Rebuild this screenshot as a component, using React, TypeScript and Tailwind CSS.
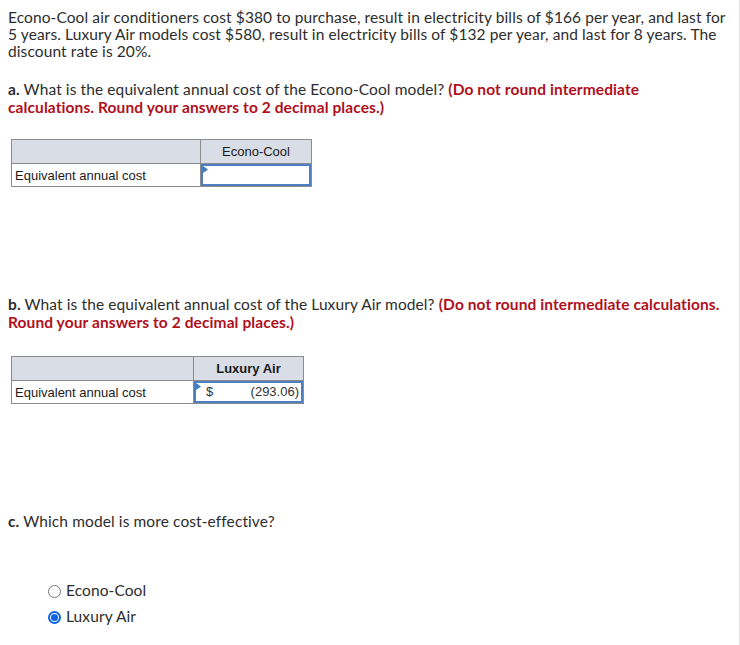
import { useState } from 'react';

const Marker = () => (
  <svg width="5" height="7" viewBox="0 0 5 7" className="absolute left-0 top-0">
    <path d="M0 0 L5 3.5 L0 7 Z" fill="#3f7cc4" />
  </svg>
);

function AnswerTable({
  label,
  header,
  leftW,
  rightW,
  headWeight,
  value,
}: {
  label: string;
  header: string;
  leftW: string;
  rightW: string;
  headWeight: string;
  value?: string;
}) {
  return (
    <table className="border-collapse font-['Liberation_Sans',Arial,sans-serif] text-[13px] tracking-normal text-[#1a1a1a]">
      <tbody>
        <tr className="h-[24px]">
          <td className={`${leftW} border border-[#8c8c8c] bg-[#d9dde5]`} />
          <td className={`${rightW} ${headWeight} border border-[#8c8c8c] bg-[#d9dde5] text-center pt-[1px]`}>{header}</td>
        </tr>
        <tr className="h-[23px]">
          <td className="border border-[#8c8c8c] px-[3px] pt-[1px]">{label}</td>
          <td className="border border-[#8c8c8c] p-0">
            <div className="relative h-[22px] border-2 border-[#4d7ec0] flex items-center px-[10px] text-[#333]">
              <Marker />
              {value && (
                <>
                  <span>$</span>
                  <span className="ml-auto -mr-[8px]">{value}</span>
                </>
              )}
            </div>
          </td>
        </tr>
      </tbody>
    </table>
  );
}

function Radio({ checked, label, onClick }: { checked: boolean; label: string; onClick: () => void }) {
  return (
    <label className="flex items-center gap-[5px] h-[26px] cursor-pointer" onClick={onClick}>
      <span
        className={`w-[13px] h-[13px] rounded-full flex items-center justify-center ${
          checked ? 'border-2 border-[#0b63e5]' : 'border border-[#767676]'
        }`}
      >
        {checked && <span className="w-[7px] h-[7px] rounded-full bg-[#0b63e5]" />}
      </span>
      <span>{label}</span>
    </label>
  );
}

export default function App() {
  const [choice, setChoice] = useState('lux');

  return (
    <div className="w-[740px] min-h-[645px] bg-white border-r border-[#e3e3e3] font-['Lato','Open_Sans',sans-serif] text-[15.5px] tracking-[0.1px] text-[#2d2d2d]">
      <div className="pl-[8px] pr-[6px] pt-[9px]">
        <p className="leading-[17px]">
          Econo-Cool air conditioners cost $380 to purchase, result in electricity bills of $166 per year, and last for 5 years. Luxury Air models cost $580, result in electricity bills of $132 per year, and last for 8 years. The discount rate is 20%.
        </p>

        <p className="mt-[20px] leading-[18px] pr-[80px]">
          <b>a.</b> What is the equivalent annual cost of the Econo-Cool model?{' '}
          <b className="text-[#b0101c]">(Do not round intermediate calculations. Round your answers to 2 decimal places.)</b>
        </p>

        <div className="mt-[23px] ml-[3px]">
          <AnswerTable
            label="Equivalent annual cost"
            header="Econo-Cool"
            headWeight="font-normal"
            leftW="w-[189px]"
            rightW="w-[111px]"
          />
        </div>

        <p className="mt-[108px] leading-[18px]">
          <b>b.</b> What is the equivalent annual cost of the Luxury Air model?{' '}
          <b className="text-[#b0101c]">(Do not round intermediate calculations. Round your answers to 2 decimal places.)</b>
        </p>

        <div className="mt-[25px] ml-[3px]">
          <AnswerTable
            label="Equivalent annual cost"
            header="Luxury Air"
            headWeight="font-bold"
            leftW="w-[182px]"
            rightW="w-[110px]"
            value="(293.06)"
          />
        </div>

        <p className="mt-[108px] leading-[18px]">
          <b>c.</b> Which model is more cost-effective?
        </p>

        <div className="mt-[48px] ml-[40px]">
          <Radio checked={choice === 'eco'} label="Econo-Cool" onClick={() => setChoice('eco')} />
          <Radio checked={choice === 'lux'} label="Luxury Air" onClick={() => setChoice('lux')} />
        </div>
      </div>
    </div>
  );
}
